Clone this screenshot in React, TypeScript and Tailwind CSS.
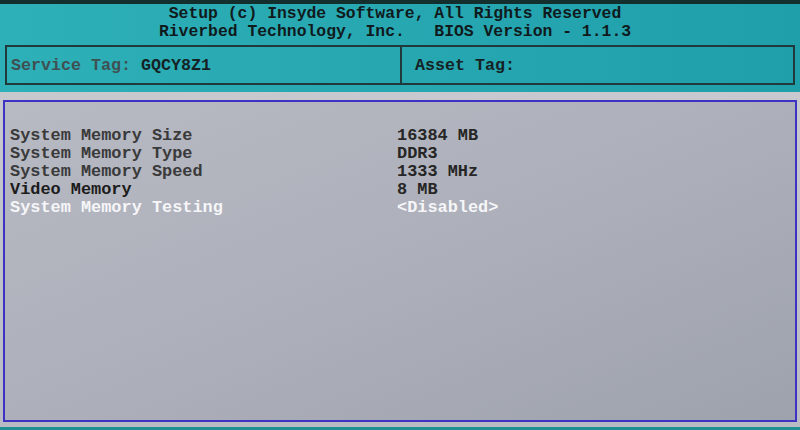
const rows = [
  { label: "System Memory Size", value: "16384 MB", tone: "text-[#3a3a3a]" },
  { label: "System Memory Type", value: "DDR3", tone: "text-[#3a3a3a]" },
  { label: "System Memory Speed", value: "1333 MHz", tone: "text-[#3a3a3a]" },
  { label: "Video Memory", value: "8 MB", tone: "text-[#1c1c1c]" },
  { label: "System Memory Testing", value: "<Disabled>", tone: "text-[#f6f6f8]" },
];

export default function App() {
  return (
    <div
      className="w-[800px] h-[430px] bg-[#13302f] pt-[4px] flex flex-col overflow-hidden"
      style={{ fontFamily: '"Liberation Mono", "DejaVu Sans Mono", monospace' }}
    >
      <div className="bg-gradient-to-r from-[#2eb0b8] to-[#1f9faa] h-[88px] flex flex-col">
        <div className="pt-[1px] text-center font-bold text-[16.4px] leading-[18px] text-[#101a1c] pr-[10px] whitespace-pre">
          <div>Setup (c) Insyde Software, All Rights Reserved</div>
          <div>Riverbed Technology, Inc.   BIOS Version - 1.1.3</div>
        </div>
        <div className="mx-[5px] mt-[4px] h-[40px] border-2 border-[#20393b] flex text-[16.67px] font-bold text-[#152224]">
          <div className="w-[395px] border-r-2 border-[#20393b] flex items-center pl-[4px]">
            <span className="text-[#3f5052]">Service Tag:</span>
            <span className="ml-[10px]">GQCY8Z1</span>
          </div>
          <div className="flex items-center pl-[13px]">Asset Tag:</div>
        </div>
      </div>
      <div className="flex-1 bg-gradient-to-b from-[#c8c9cf] to-[#b9bbc4] pt-[8px] px-[3px] pb-[5px]">
        <div className="h-full border-2 border-[#3d32c4] bg-gradient-to-br from-[#b7b9c3] via-[#adb0ba] to-[#9ea2ad] pt-[25px] pl-[5px]">
          {rows.map((r) => (
            <div key={r.label} className={`flex font-bold text-[16.9px] leading-[18px] ${r.tone}`}>
              <div className="w-[387px] whitespace-pre">{r.label}</div>
              <div className={r.value === "<Disabled>" ? "" : "text-[#262626]"}>{r.value}</div>
            </div>
          ))}
        </div>
      </div>
      <div className="h-[3px] bg-[#1f8f94]" />
    </div>
  );
}
